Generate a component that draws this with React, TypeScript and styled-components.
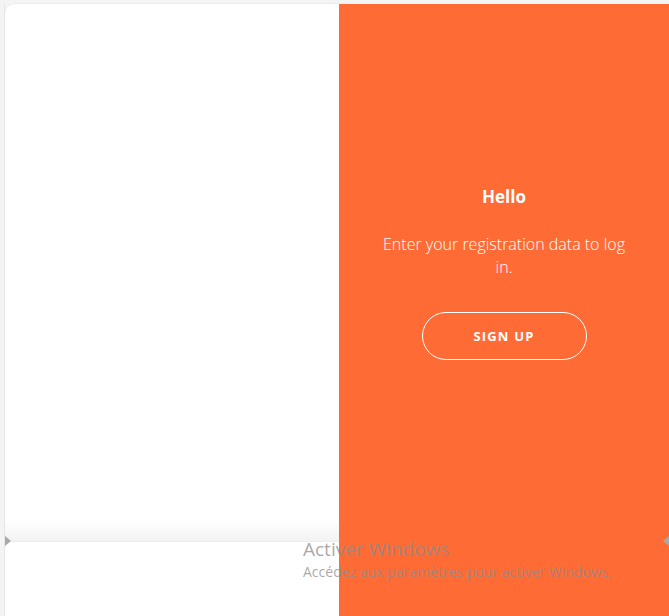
import React from "react";
import { createGlobalStyle, styled } from "styled-components";

const GlobalStyle = createGlobalStyle`
  html, body {
    margin: 0;
    padding: 0;
    background: #f4f4f4;
    font-family: "Open Sans", "Noto Sans", sans-serif;
  }
`;

const App: React.FC = () => {
  return (
    <>
      <GlobalStyle />
      <Page>
        <LeftColumn>
          <FormCard />
          <LowerCard />
        </LeftColumn>
        <OverlayPanel>
          <OverlayContent>
            <Title>Hello</Title>
            <Message>Enter your registration data to log in.</Message>
            <GhostButton>SIGN UP</GhostButton>
          </OverlayContent>
        </OverlayPanel>
        <Arrow $side="left" />
        <Arrow $side="right" />
        <Watermark>
          <WatermarkTitle>Activer Windows</WatermarkTitle>
          <WatermarkText>Accédez aux paramètres pour activer Windows.</WatermarkText>
        </Watermark>
      </Page>
    </>
  );
};

export default App;

const Page = styled.div`
  position: relative;
  display: grid;
  grid-template-columns: 334px 330px;
  height: 612px;
  padding: 4px 0 0 5px;
  overflow: hidden;
`;

const LeftColumn = styled.div`
  display: flex;
  flex-direction: column;
  box-shadow: -1px 0 0 #e6e6e6;
`;

const FormCard = styled.div`
  height: 537px;
  background: linear-gradient(to bottom, #ffffff 0%, #ffffff 96%, #f3f3f3 100%);
  border-top-left-radius: 10px;
  box-shadow: 0 -1px 0 #ececec;
`;

const LowerCard = styled.div`
  flex: 1;
  background: #ffffff;
  border-top: 1px solid #ececec;
`;

const OverlayPanel = styled.div`
  background: #ff6b35;
  color: #ffffff;
`;

const OverlayContent = styled.div`
  height: 537px;
  display: flex;
  flex-direction: column;
  align-items: center;
  justify-content: center;
  text-align: center;
  padding: 0 40px;
  box-sizing: border-box;
`;

const Title = styled.h1`
  margin: 0 0 25px;
  font-size: 17px;
  font-weight: 700;
  line-height: 22px;
`;

const Message = styled.p`
  max-width: 250px;
  margin: 0 0 33px;
  font-size: 16px;
  font-weight: 300;
  line-height: 23px;
`;

const GhostButton = styled.button`
  width: 165px;
  height: 48px;
  border: 1px solid #ffffff;
  border-radius: 24px;
  background: transparent;
  color: #ffffff;
  font-family: inherit;
  font-size: 13px;
  font-weight: 700;
  letter-spacing: 1.2px;
  cursor: pointer;
`;

const Arrow = styled.span<{ $side: "left" | "right" }>`
  position: absolute;
  top: 536px;
  ${(p) => (p.$side === "left" ? "left: 5px;" : "right: 0;")}
  width: 0;
  height: 0;
  border-top: 5px solid transparent;
  border-bottom: 5px solid transparent;
  ${(p) =>
    p.$side === "left"
      ? "border-left: 6px solid #a9a9a9;"
      : "border-right: 6px solid #a9a9a9;"}
`;

const Watermark = styled.div`
  position: absolute;
  left: 303px;
  top: 537px;
  color: rgba(140, 140, 140, 0.75);
  font-family: "Open Sans", "Noto Sans", sans-serif;
  pointer-events: none;
`;

const WatermarkTitle = styled.div`
  font-size: 19px;
  line-height: 25px;
`;

const WatermarkText = styled.div`
  font-size: 14px;
  line-height: 20px;
`;
